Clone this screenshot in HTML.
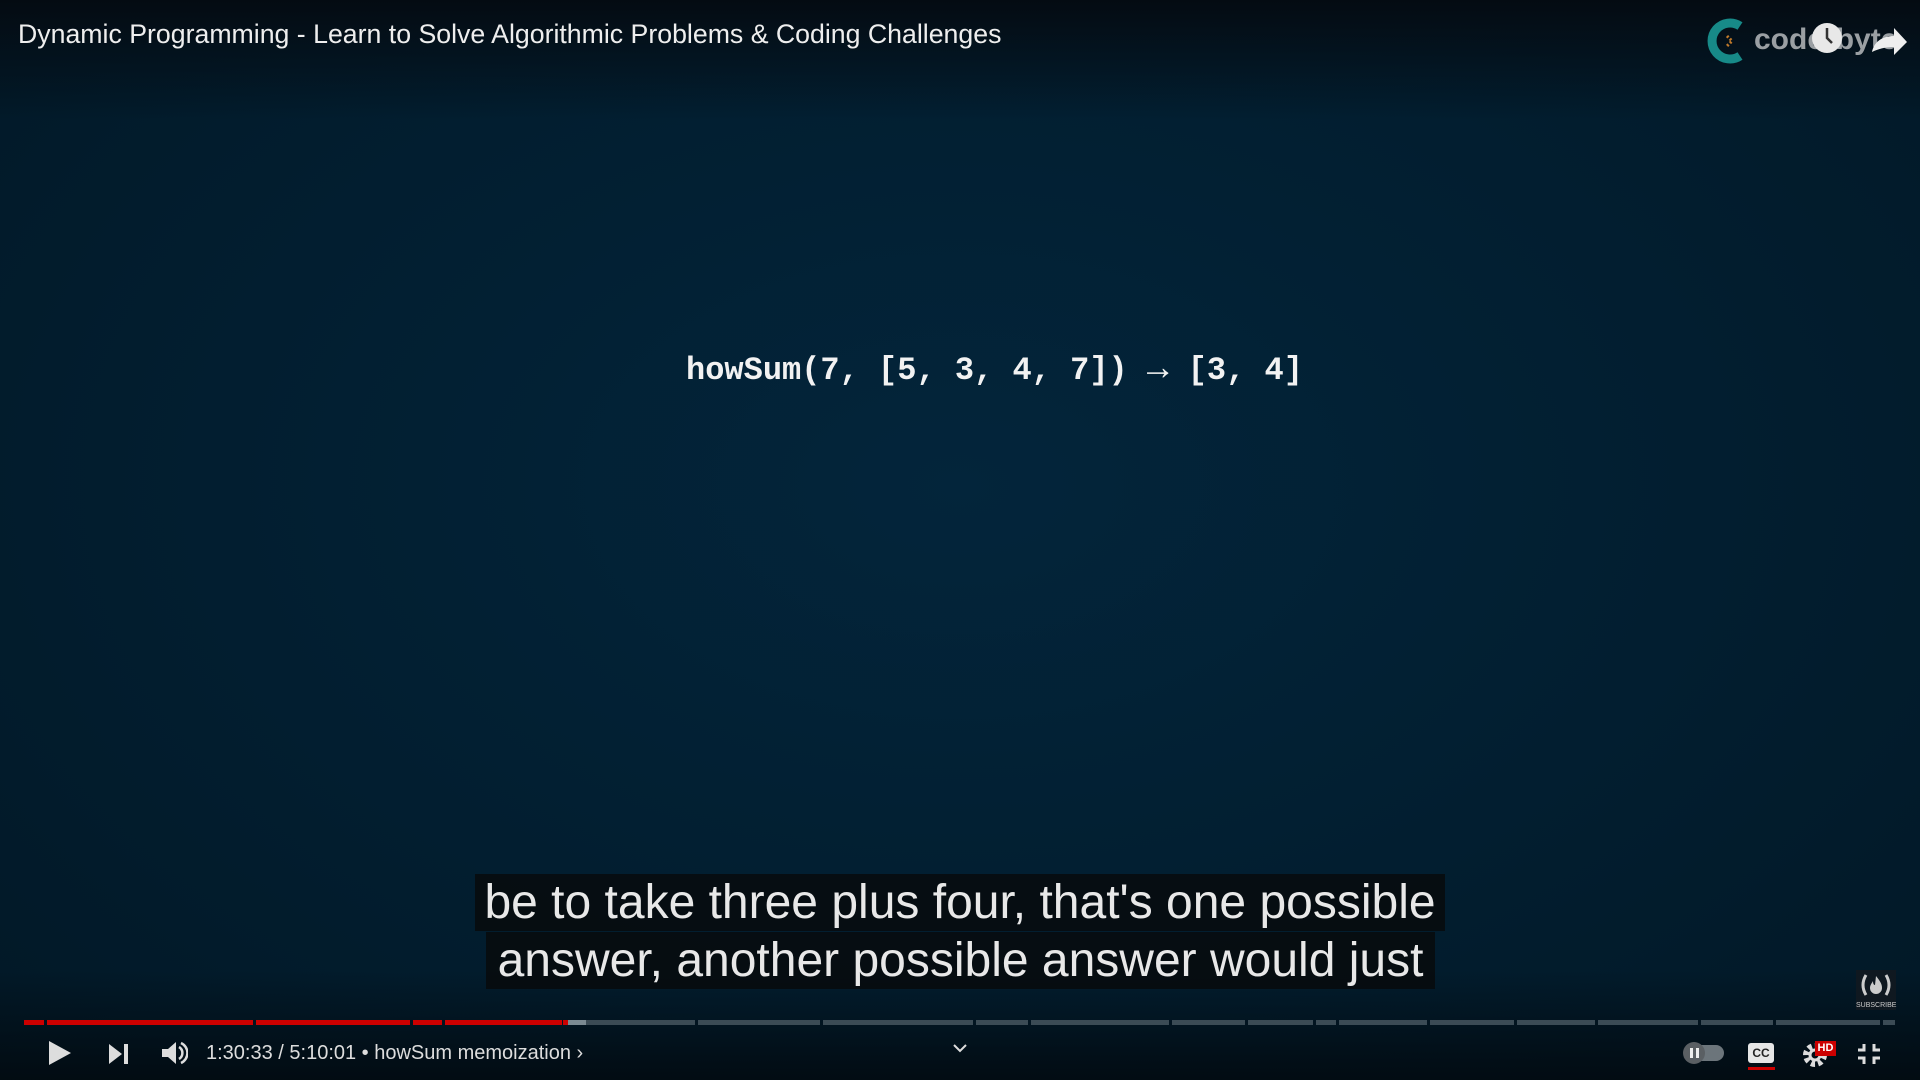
<!DOCTYPE html>
<html><head><meta charset="utf-8"><style>
html,body{margin:0;padding:0;width:1920px;height:1080px;overflow:hidden;background:#02202f;}
body{position:relative;font-family:"Liberation Sans",sans-serif;
background:radial-gradient(ellipse at 50% 45%,#03253b 0%,#021e30 55%,#021826 100%);}
.topg{position:absolute;left:0;top:0;width:1920px;height:120px;background:linear-gradient(#040b12 0%,rgba(4,11,18,0.5) 50%,rgba(0,0,0,0));}
.botg{position:absolute;left:0;bottom:0;width:1920px;height:110px;background:linear-gradient(rgba(0,0,0,0),rgba(2,10,16,0.9));}
.title{position:absolute;left:18px;top:19px;font-size:26.7px;color:#eee;white-space:nowrap;}
.code{position:absolute;left:686px;top:349px;font-family:"Liberation Mono",monospace;font-weight:bold;font-size:32px;color:#f2f2f2;white-space:nowrap;}
.sub{position:absolute;background:rgba(8,8,8,0.75);color:#e8e8e8;font-size:48px;line-height:57px;white-space:nowrap;}
.seg{position:absolute;top:1020px;height:5px;background:#3b4b55;}
.red{background:#cc0000;}
.ctrl{position:absolute;color:#ddd;}
.time{position:absolute;left:206px;top:1042px;font-size:20px;color:#ddd;white-space:nowrap;}
</style></head><body>
<div class="topg"></div><div class="botg"></div>
<div class="title">Dynamic Programming - Learn to Solve Algorithmic Problems &amp; Coding Challenges</div>
<svg style="position:absolute;left:1700px;top:12px" width="220" height="60" viewBox="0 0 220 60">
<path d="M40 14 A18 18 0 1 0 40 44" stroke="#178a88" stroke-width="9" fill="none"/>
<path d="M27 24l5 5-5 5" stroke="#c27a2a" stroke-width="3" stroke-dasharray="2 2" fill="none"/>
<text x="54" y="37" fill="#9a9fa3" font-size="30" font-weight="bold" font-family="Liberation Sans">coderbyte</text>
<circle cx="127" cy="26" r="15" fill="#e8e8e8"/><path d="M127 16v10l5 5" stroke="#333" stroke-width="2.5" fill="none"/>
<path d="M172 40c2-10 10-16 22-16v-8l13 14-13 13v-8c-9 0-16 2-22 5z" fill="#eee"/>
</svg>
<div class="code">howSum(7, [5, 3, 4, 7]) <span style="font-size:36px">→</span> [3, 4]</div>
<div class="sub" style="left:475px;top:874px;width:970px;text-align:center">be to take three plus four, that's one possible</div>
<div class="sub" style="left:486px;top:932px;width:949px;text-align:center">answer, another possible answer would just</div>
<div style="position:absolute;left:1856px;top:970px;width:40px;height:40px;background:#0f1820;color:#ccc;text-align:center;font-size:7px;">
<svg width="40" height="30" viewBox="0 0 40 30"><path d="M10 5q-6 10 0 20M30 5q6 10 0 20" stroke="#ccc" stroke-width="3" fill="none"/><path d="M20 6c4 5 6 8 6 12a6 6 0 0 1-12 0c0-3 2-5 3-7 0 3 1 4 2 4z" fill="#ccc"/></svg>SUBSCRIBE</div>
<div class="seg red" style="left:24px;width:20px"></div>
<div class="seg red" style="left:47px;width:206px"></div>
<div class="seg red" style="left:256px;width:154px"></div>
<div class="seg red" style="left:413px;width:29px"></div>
<div class="seg red" style="left:445px;width:117px"></div>
<div class="seg red" style="left:563px;width:5px"></div>
<div class="seg" style="left:568px;width:18px;background:#7b8a92"></div>
<div class="seg" style="left:586px;width:109px"></div>
<div class="seg" style="left:698px;width:122px"></div>
<div class="seg" style="left:823px;width:150px"></div>
<div class="seg" style="left:976px;width:52px"></div>
<div class="seg" style="left:1031px;width:138px"></div>
<div class="seg" style="left:1172px;width:73px"></div>
<div class="seg" style="left:1248px;width:65px"></div>
<div class="seg" style="left:1316px;width:20px"></div>
<div class="seg" style="left:1339px;width:88px"></div>
<div class="seg" style="left:1430px;width:84px"></div>
<div class="seg" style="left:1517px;width:78px"></div>
<div class="seg" style="left:1598px;width:100px"></div>
<div class="seg" style="left:1701px;width:72px"></div>
<div class="seg" style="left:1776px;width:104px"></div>
<div class="seg" style="left:1883px;width:12px"></div>
<svg class="ctrl" style="left:44px;top:1038px" width="30" height="30"><path d="M5 3L27 15L5 27z" fill="#ddd"/></svg>
<svg class="ctrl" style="left:106px;top:1042px" width="26" height="24"><path d="M3 2L16 12L3 22z" fill="#ddd"/><rect x="18" y="2" width="4" height="20" fill="#ddd"/></svg>
<svg class="ctrl" style="left:160px;top:1040px" width="28" height="26"><path d="M2 9h6l8-7v22l-8-7H2z" fill="#ddd"/><path d="M19 7a7 7 0 0 1 0 12M21 3a11 11 0 0 1 0 20" stroke="#ddd" stroke-width="2.5" fill="none"/></svg>
<div class="time">1:30:33 / 5:10:01 • howSum memoization ›</div>
<svg class="ctrl" style="left:952px;top:1042px" width="16" height="12"><path d="M2 3l6 6 6-6" stroke="#ddd" stroke-width="2" fill="none"/></svg>
<div style="position:absolute;left:1688px;top:1045px;width:36px;height:16px;border-radius:8px;background:#6c757b"></div>
<div style="position:absolute;left:1683px;top:1042px;width:22px;height:22px;border-radius:11px;background:#5a5f63"></div>
<div style="position:absolute;left:1690px;top:1048px;width:3px;height:10px;background:#eee"></div>
<div style="position:absolute;left:1696px;top:1048px;width:3px;height:10px;background:#eee"></div>
<div style="position:absolute;left:1748px;top:1043px;width:26px;height:20px;border-radius:3px;background:#e6e6e6;color:#222;font-weight:bold;font-size:12px;text-align:center;line-height:20px">CC</div>
<div style="position:absolute;left:1748px;top:1067px;width:27px;height:3px;background:#cc0000"></div>
<svg class="ctrl" style="left:1802px;top:1040px" width="30" height="28"><circle cx="13" cy="15" r="9" fill="none" stroke="#ddd" stroke-width="6" stroke-dasharray="4 3"/><circle cx="13" cy="15" r="5" fill="none" stroke="#ddd" stroke-width="3"/></svg>
<div style="position:absolute;left:1815px;top:1041px;width:21px;height:15px;background:#cc0000;color:#fff;font-size:11px;font-weight:bold;text-align:center;line-height:15px">HD</div>
<svg class="ctrl" style="left:1856px;top:1042px" width="26" height="24"><path d="M8 2v6H2M18 2v6h6M8 22v-6H2M18 22v-6h6" stroke="#ddd" stroke-width="3" fill="none"/></svg>
</body></html>
